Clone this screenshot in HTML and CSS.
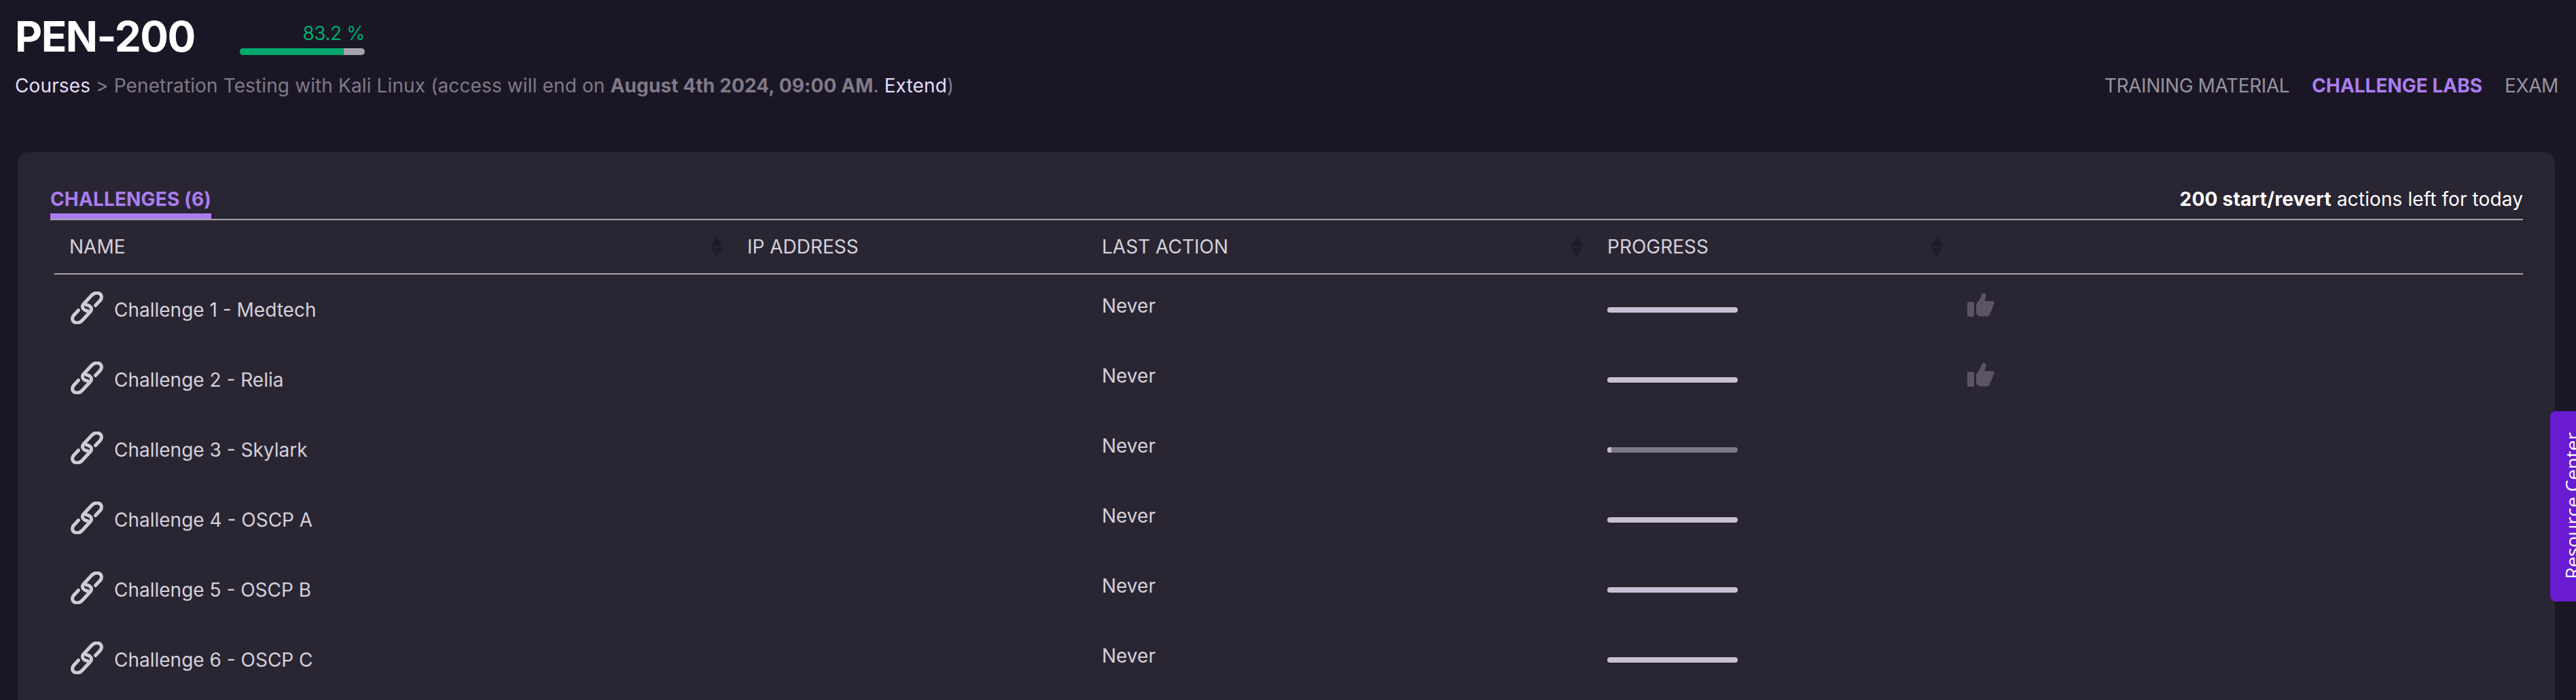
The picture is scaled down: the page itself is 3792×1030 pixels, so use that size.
FILE: index.html
```html
<!DOCTYPE html>
<html lang="en">
<head>
<meta charset="utf-8">
<title>PEN-200</title>
<link rel="stylesheet" href="styles.css">
</head>
<body>
<svg class="defs" width="0" height="0" aria-hidden="true">
  <defs>
    <symbol id="link" viewBox="0 0 48 48">
      <g fill="none" stroke="currentColor" stroke-width="5" stroke-linecap="round" stroke-linejoin="round">
        <path d="M36.500 20.500 L43.500 13 C47 9 45.500 3.500 41 2.300 C36.500 1.200 33.500 2.800 31 5.500 L18.500 19 C16 22.500 18 27.500 25 28.500"/>
        <path d="M11.500 27.500 L4.500 35 C1 39 2.500 44.500 7 45.700 C11.500 46.800 14.500 45.200 17 42.500 L29.500 29 C32 25.500 30 20.500 23 19.500"/>
      </g>
    </symbol>
    <symbol id="thumb" viewBox="0 0 40 35">
      <rect x="0" y="13" width="10" height="22" rx="2.500" fill="currentColor"/>
      <path fill="currentColor" d="M13 18 C13 15 19 11 21 2.500 C21.800 -0.500 27.500 -0.500 27.500 3 C27.500 6 26.500 9 25.500 12 L37 12 C40.500 12 41 17 37.500 18 C38.500 20 37 23 36 23.500 C36.500 25.500 35 28 33.500 28.500 C34 31 32 34.500 29 34.500 L21 34.500 C16 34.500 13 32 13 29 Z"/>
    </symbol>
    <symbol id="sort" viewBox="0 0 18 28">
      <path fill="currentColor" d="M9 0 L18 13 L0 13 Z M0 15 L18 15 L9 28 Z"/>
    </symbol>
  </defs>
</svg>

<header class="top">
  <div class="title-row">
    <h1 class="title">PEN-200</h1>
    <div class="course-progress">
      <span class="course-pct">83.2 %</span>
      <div class="course-track"><div class="course-fill" style="width:83.2%"></div></div>
    </div>
  </div>
  <div class="crumb-row">
    <p class="crumbs"><a class="lav">Courses</a> &gt; Penetration Testing with Kali Linux (access will end on <strong>August 4th 2024, 09:00 AM</strong>. <a class="lav">Extend</a>)</p>
    <nav class="nav">
      <a>TRAINING MATERIAL</a>
      <a class="active">CHALLENGE LABS</a>
      <a>EXAM</a>
    </nav>
  </div>
</header>

<main class="panel">
  <div class="tabs">
    <span class="tab">CHALLENGES (6)</span>
    <span class="actions"><strong>200 start/revert</strong> actions left for today</span>
  </div>
  <div class="table">
    <div class="row head">
      <div class="cell"><span>NAME</span><svg class="sort"><use href="#sort"/></svg></div>
      <div class="cell"><span>IP ADDRESS</span></div>
      <div class="cell"><span>LAST ACTION</span><svg class="sort"><use href="#sort"/></svg></div>
      <div class="cell"><span>PROGRESS</span><svg class="sort"><use href="#sort"/></svg></div>
      <div class="cell"></div>
    </div>

    <div class="row">
      <div class="cell name"><svg class="link"><use href="#link"/></svg>Challenge 1 - Medtech</div>
      <div class="cell"></div>
      <div class="cell last">Never</div>
      <div class="cell"><div class="bar"></div></div>
      <div class="cell"><svg class="thumb"><use href="#thumb"/></svg></div>
    </div>
    <div class="row">
      <div class="cell name"><svg class="link"><use href="#link"/></svg>Challenge 2 - Relia</div>
      <div class="cell"></div>
      <div class="cell last">Never</div>
      <div class="cell"><div class="bar"></div></div>
      <div class="cell"><svg class="thumb"><use href="#thumb"/></svg></div>
    </div>
    <div class="row">
      <div class="cell name"><svg class="link"><use href="#link"/></svg>Challenge 3 - Skylark</div>
      <div class="cell"></div>
      <div class="cell last">Never</div>
      <div class="cell"><div class="bar partial"><div class="bar-fill" style="width:3%"></div></div></div>
      <div class="cell"></div>
    </div>
    <div class="row">
      <div class="cell name"><svg class="link"><use href="#link"/></svg>Challenge 4 - OSCP A</div>
      <div class="cell"></div>
      <div class="cell last">Never</div>
      <div class="cell"><div class="bar"></div></div>
      <div class="cell"></div>
    </div>
    <div class="row">
      <div class="cell name"><svg class="link"><use href="#link"/></svg>Challenge 5 - OSCP B</div>
      <div class="cell"></div>
      <div class="cell last">Never</div>
      <div class="cell"><div class="bar"></div></div>
      <div class="cell"></div>
    </div>
    <div class="row">
      <div class="cell name"><svg class="link"><use href="#link"/></svg>Challenge 6 - OSCP C</div>
      <div class="cell"></div>
      <div class="cell last">Never</div>
      <div class="cell"><div class="bar"></div></div>
      <div class="cell"></div>
    </div>
  </div>
</main>

<aside class="resource"><span>Resource Center</span></aside>
</body>
</html>
```

FILE: styles.css
```css
* { box-sizing: border-box; }
html, body { height: 100%; }
body {
  margin: 0;
  overflow: hidden;
  background: #1a1625;
  color: #d5d1da;
  font-family: Inter, "Liberation Sans", sans-serif;
  font-size: 28px;
}
.defs { position: absolute; }

.top { padding: 23px 26px 0 22px; }
.title-row { display: flex; align-items: flex-end; gap: 66px; height: 62px; }
.title { margin: 0; font-size: 62px; line-height: 62px; font-weight: 700; letter-spacing: -1.5px; color: #fff; }
.course-progress { width: 184px; display: flex; flex-direction: column; align-items: flex-end; margin-bottom: 4px; }
.course-pct { font-size: 28px; line-height: 34px; font-weight: 400; letter-spacing: -0.5px; color: #00a86b; }
.course-track { width: 100%; height: 10px; margin-top: 5px; border-radius: 5px; background: #a8a4ad; overflow: hidden; }
.course-fill { height: 100%; background: #00a86b; }

.crumb-row { display: flex; justify-content: space-between; align-items: center; margin-top: 24px; height: 34px; }
.crumbs { margin: 0; color: #807a88; line-height: 34px; letter-spacing: 0.12px; }
.crumbs strong { font-weight: 700; }
.lav { color: #e4dcf8; }
.nav { display: flex; gap: 33px; color: #98939f; line-height: 34px; letter-spacing: -0.4px; }
.nav .active { color: #ab7def; font-weight: 700; letter-spacing: 0; }

.panel {
  margin: 81px 31px 0 26px;
  padding: 48px 47px 0 48px;
  height: 900px;
  background: #2a2533;
  border-radius: 16px;
}
.tabs {
  display: flex;
  justify-content: space-between;
  align-items: flex-end;
  border-bottom: 2px solid #a8a4ad;
}
.tab {
  color: #ab7def;
  font-weight: 700;
  line-height: 42px;
  letter-spacing: 0.15px;
  border-bottom: 8px solid #ab7def;
  width: 237px;
  white-space: nowrap;
}
.actions { color: #fff; line-height: 42px; padding-bottom: 8px; letter-spacing: 0.1px; }
.actions strong { font-weight: 700; letter-spacing: 0.25px; }

.table { margin-left: 6px; }
.row {
  display: grid;
  grid-template-columns: 998px 522px 744px 530px 1fr;
  height: 103px;
  align-items: center;
}
.row.head {
  height: 80px;
  border-bottom: 2px solid #a8a4ad;
  color: #d5d1da;
}
.cell { padding: 0 14px 0 22px; display: flex; align-items: center; justify-content: space-between; min-width: 0; }
.name { justify-content: flex-start; gap: 16px; padding-left: 24px; }
.last { padding-bottom: 12px; }
.sort { width: 18px; height: 28px; color: #1e1a29; flex: none; }
.link { width: 48px; height: 48px; color: #d0ccd6; flex: none; margin-bottom: 6px; }
.bar { width: 192px; height: 8px; border-radius: 4px; background: #c8c0d4; overflow: hidden; }
.bar.partial { background: #7d7885; }
.bar-fill { height: 100%; background: #c8c0d4; }
.thumb { width: 40px; height: 35px; color: #5a5464; margin-bottom: 14px; }

.resource {
  position: fixed;
  right: 0;
  top: 605px;
  width: 38px;
  height: 280px;
  background: #6a1bd1;
  border-radius: 8px 0 0 8px;
  overflow: hidden;
  color: #fff;
  font-family: "Open Sans", sans-serif;
  font-size: 28px;
}
.resource span {
  position: absolute;
  left: 13px;
  top: 32px;
  height: 215px;
  writing-mode: vertical-rl;
  transform: rotate(180deg);
  white-space: nowrap;
  line-height: 38px;
}
```
